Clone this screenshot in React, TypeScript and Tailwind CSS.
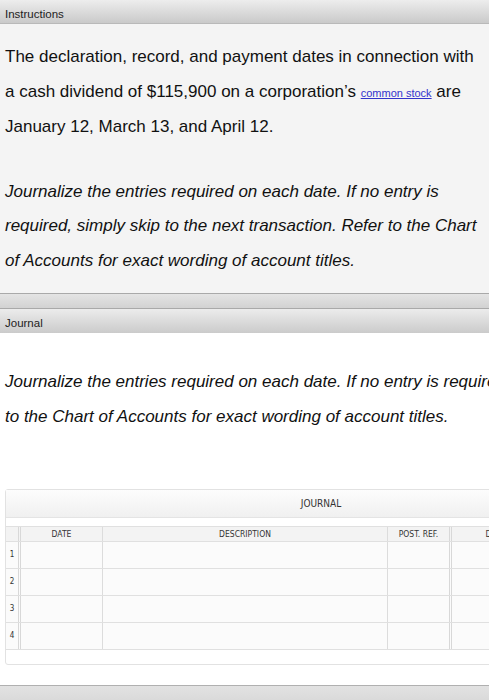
import React from 'react';

const rows = [1, 2, 3, 4];

const App = () => {
    return (
        <div className="w-[489px] h-[700px] overflow-hidden bg-white font-['Liberation_Sans',Arial,sans-serif] text-[#111]">
            {/* Instructions */}
            <div className="h-[24px] pt-[8px] px-[5px] text-[11.5px] leading-[12px] text-[#222] bg-gradient-to-b from-[#ededed] to-[#cacaca] border-b border-[#b9b9b9]">
                Instructions
            </div>
            <div className="bg-[#f4f4f4] px-[5px] pt-[16px] pb-[15px]">
                <p className="text-[17px] leading-[34.5px] whitespace-nowrap">
                    The declaration, record, and payment dates in connection with
                    <br />
                    a cash dividend of $115,900 on a corporation’s{' '}
                    <a href="#" className="text-[11px] text-[#3333cc] underline">
                        common stock
                    </a>{' '}
                    are
                    <br />
                    January 12, March 13, and April 12.
                </p>
                <p className="mt-[30px] text-[17px] leading-[34.5px] italic whitespace-nowrap">
                    Journalize the entries required on each date. If no entry is
                    <br />
                    required, simply skip to the next transaction. Refer to the Chart
                    <br />
                    of Accounts for exact wording of account titles.
                </p>
            </div>
            <div className="h-[16px] border-t border-b border-[#a9a9a9] bg-gradient-to-b from-[#e4e4e4] to-[#d2d2d2]" />

            {/* Journal */}
            <div className="h-[24px] pt-[8px] px-[5px] text-[11.5px] leading-[12px] text-[#222] bg-gradient-to-b from-[#ececec] to-[#cbcbcb]">
                Journal
            </div>
            <div className="bg-white pl-[5px] pt-[32px]">
                <p className="text-[17px] leading-[34.5px] italic whitespace-nowrap">
                    Journalize the entries required on each date. If no entry is required, simply skip to the next transaction. Refer
                    <br />
                    to the Chart of Accounts for exact wording of account titles.
                </p>

                <div className="mt-[55px] w-[640px] rounded-[3px] border border-[#e2e2e2] bg-white font-['DejaVu_Sans_Condensed','DejaVu_Sans',sans-serif] text-[#333]">
                    <div className="h-[28px] flex items-center bg-gradient-to-b from-[#fdfdfd] to-[#f0f0f0] border-b border-[#e4e4e4]">
                        <span className="w-[630px] text-center text-[10px]">JOURNAL</span>
                    </div>
                    <div className="h-[8px]" />
                    <div className="flex h-[16px] bg-[#f3f3f3] border-t border-b border-[#e0e0e0] text-[8.5px]">
                        <div className="w-[15px] border-r-[3px] border-double border-[#d8d8d8]" />
                        <div className="w-[82px] flex items-center justify-center border-r border-[#dcdcdc]">DATE</div>
                        <div className="w-[285px] flex items-center justify-center border-r border-[#dcdcdc]">DESCRIPTION</div>
                        <div className="w-[64px] flex items-center justify-center border-r-[3px] border-double border-[#d8d8d8]">POST. REF.</div>
                        <div className="w-[90px] flex items-center justify-center">DEBIT</div>
                    </div>
                    {rows.map((n) => (
                        <div key={n} className="flex h-[27px] bg-[#fbfbfb] border-b border-[#e0e0e0] text-[8px]">
                            <div className="w-[15px] flex items-center justify-center border-r-[3px] border-double border-[#d8d8d8]">{n}</div>
                            <div className="w-[82px] border-r border-[#dcdcdc]" />
                            <div className="w-[285px] border-r border-[#dcdcdc]" />
                            <div className="w-[64px] border-r-[3px] border-double border-[#d8d8d8]" />
                            <div className="w-[90px]" />
                        </div>
                    ))}
                    <div className="h-[14px]" />
                </div>
                <div className="h-[20px]" />
            </div>
            <div className="h-[40px] border-t border-[#b0b0b0] bg-gradient-to-b from-[#e2e2e2] to-[#cccccc]" />
        </div>
    );
};

export default App;
